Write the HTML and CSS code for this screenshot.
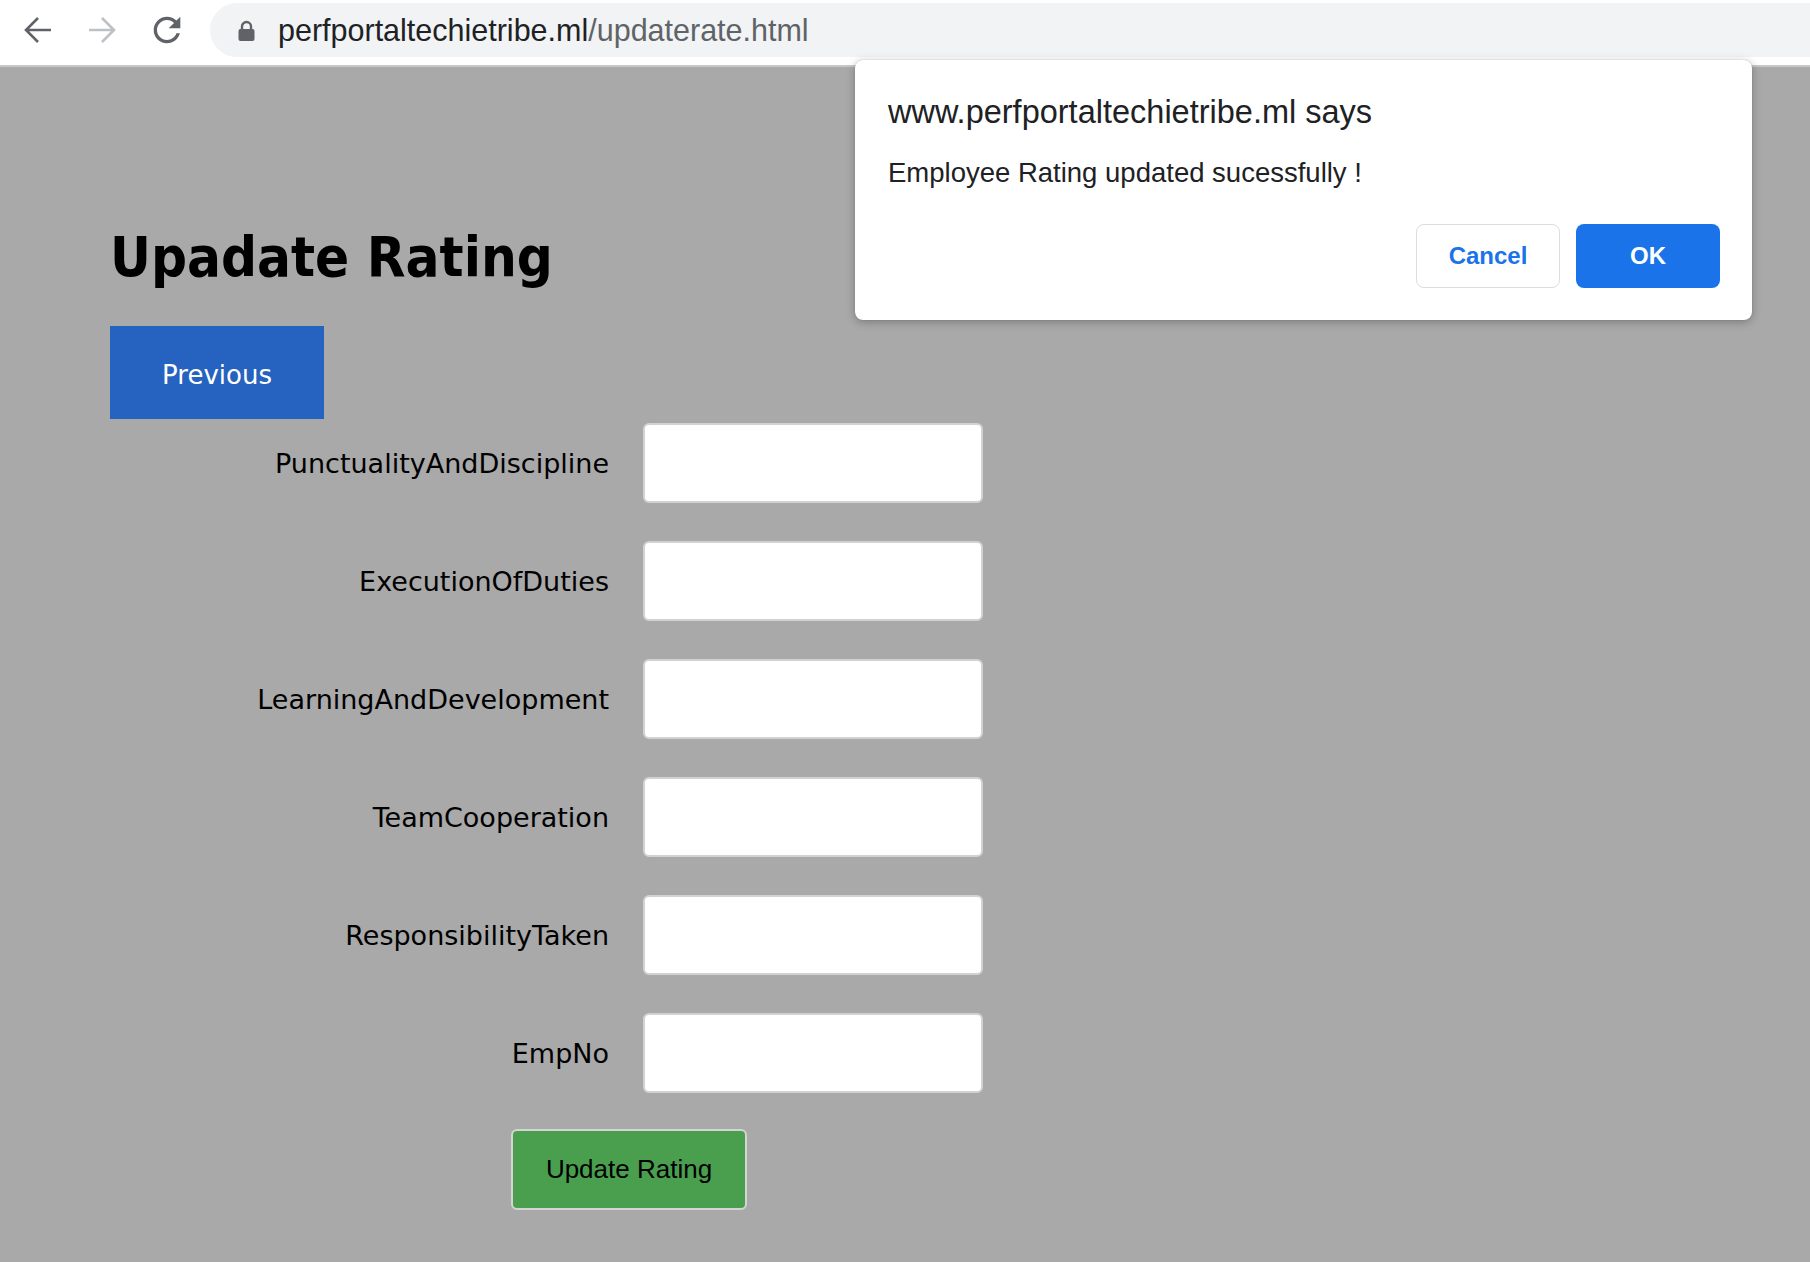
FILE: index.html
```html
<!DOCTYPE html>
<html lang="en">
<head>
<meta charset="utf-8">
<title>Update Rating</title>
<link rel="stylesheet" href="styles.css">
</head>
<body>
<header class="toolbar">
  <svg class="nav-icon back" width="28" height="28" viewBox="0 0 28 28"><path d="M27 14H2M14 2L2 14L14 26" fill="none" stroke="#5f6368" stroke-width="2.6"/></svg>
  <svg class="nav-icon fwd" width="28" height="28" viewBox="0 0 28 28"><path d="M1 14H26M14 2L26 14L14 26" fill="none" stroke="#bdc1c6" stroke-width="2.6"/></svg>
  <svg class="nav-icon reload" width="40" height="40" viewBox="0 0 24 24"><path fill="#5f6368" d="M17.65 6.35C16.2 4.9 14.21 4 12 4c-4.42 0-7.99 3.58-7.99 8s3.57 8 7.99 8c3.73 0 6.84-2.55 7.73-6h-2.08c-.82 2.33-3.04 4-5.65 4-3.31 0-6-2.69-6-6s2.69-6 6-6c1.66 0 3.14.69 4.22 1.78L13 11h7V4l-2.35 2.35z"/></svg>
  <div class="omnibox">
    <svg class="lock" width="17" height="21" viewBox="0 0 17 21"><path d="M4 10V6.5a4.5 4.5 0 0 1 9 0V10" fill="none" stroke="#5f6368" stroke-width="2.4"/><rect x="0.5" y="9" width="16" height="12" rx="2" fill="#5f6368"/></svg>
    <span class="url"><span class="host">perfportaltechietribe.ml</span><span class="path">/updaterate.html</span></span>
  </div>
</header>

<main class="page">
  <h1 class="title">Upadate Rating</h1>
  <button class="prev" type="button">Previous</button>
  <form class="rating-form">
    <label class="field-label" for="f1">PunctualityAndDiscipline</label>
    <input class="field-input" id="f1" type="text">
    <label class="field-label" for="f2">ExecutionOfDuties</label>
    <input class="field-input" id="f2" type="text">
    <label class="field-label" for="f3">LearningAndDevelopment</label>
    <input class="field-input" id="f3" type="text">
    <label class="field-label" for="f4">TeamCooperation</label>
    <input class="field-input" id="f4" type="text">
    <label class="field-label" for="f5">ResponsibilityTaken</label>
    <input class="field-input" id="f5" type="text">
    <label class="field-label" for="f6">EmpNo</label>
    <input class="field-input" id="f6" type="text">
  </form>
  <button class="submit" type="button">Update Rating</button>
</main>

<div class="dialog" role="dialog">
  <div class="dialog-title">www.perfportaltechietribe.ml says</div>
  <div class="dialog-msg">Employee Rating updated sucessfully !</div>
  <div class="dialog-actions">
    <button class="btn-cancel" type="button">Cancel</button>
    <button class="btn-ok" type="button">OK</button>
  </div>
</div>
</body>
</html>
```
FILE: styles.css
```css
html, body {
  margin: 0;
  padding: 0;
}
body {
  width: 1810px;
  height: 1262px;
  overflow: hidden;
  background: #a9a9a9;
  font-family: "DejaVu Sans", sans-serif;
  position: relative;
}

/* ---------- browser toolbar ---------- */
.toolbar {
  box-sizing: border-box;
  height: 67px;
  padding: 0 0 5px 24px;
  background: #ffffff;
  border-bottom: 2px solid #c7c7c7;
  display: flex;
  align-items: center;
}
.nav-icon {
  flex: none;
  display: block;
}
.fwd {
  margin-left: 36px;
}
.reload {
  margin-left: 31px;
}
.omnibox {
  flex: 1;
  margin-left: 23px;
  height: 54px;
  background: #f1f3f4;
  border-radius: 27px 0 0 27px;
  display: flex;
  align-items: center;
  padding-left: 28px;
}
.lock {
  display: block;
  flex: none;
}
.url {
  margin-left: 23px;
  font-family: "Liberation Sans", Arial, sans-serif;
  font-size: 30.5px;
  line-height: 1;
  white-space: nowrap;
}
.host {
  color: #202124;
}
.path {
  color: #5f6368;
}

/* ---------- page ---------- */
.page {
  padding-left: 110px;
  display: flex;
  flex-direction: column;
  align-items: flex-start;
}
.title {
  margin: 157px 0 0 0;
  font-family: "DejaVu Sans Condensed", "DejaVu Sans", sans-serif;
  font-weight: bold;
  font-size: 56px;
  line-height: 66px;
  color: #000;
}
.prev {
  margin-top: 36px;
  width: 214px;
  height: 93px;
  box-sizing: border-box;
  border: none;
  background: #2663c0;
  color: #ffffff;
  font-family: "DejaVu Sans", sans-serif;
  font-size: 26px;
  padding: 4px 0 0 0;
}
.rating-form {
  margin-top: 4px;
  display: grid;
  grid-template-columns: 499px 340px;
  column-gap: 34px;
  row-gap: 38px;
  align-items: center;
}
.field-label {
  text-align: right;
  font-family: "DejaVu Sans", sans-serif;
  font-size: 27px;
  color: #000;
  white-space: nowrap;
}
.field-input {
  box-sizing: border-box;
  width: 340px;
  height: 80px;
  margin: 0;
  background: #ffffff;
  border: 2px solid #d2d2d2;
  border-radius: 6px;
  outline: none;
}
.submit {
  margin: 36px 0 0 401px;
  width: 236px;
  height: 81px;
  box-sizing: border-box;
  background: #4a9f4e;
  border: 2px solid #d4d4d4;
  border-radius: 6px;
  font-family: "Liberation Sans", Arial, sans-serif;
  font-size: 26px;
  color: #000;
  padding: 0;
}

/* ---------- alert dialog ---------- */
.dialog {
  position: absolute;
  top: 60px;
  left: 855px;
  width: 897px;
  height: 260px;
  box-sizing: border-box;
  padding: 32px 32px 32px 33px;
  background: #ffffff;
  border-radius: 8px;
  box-shadow: 0 2px 10px rgba(0, 0, 0, 0.28), 0 0 1px rgba(0, 0, 0, 0.3);
  display: flex;
  flex-direction: column;
  font-family: "Liberation Sans", Arial, sans-serif;
  color: #202124;
}
.dialog-title {
  font-size: 32.5px;
  line-height: 40px;
  white-space: nowrap;
}
.dialog-msg {
  margin-top: 24px;
  font-size: 27.5px;
  line-height: 34px;
  white-space: nowrap;
}
.dialog-actions {
  margin-top: 34px;
  display: flex;
  justify-content: flex-end;
  gap: 16px;
}
.btn-cancel,
.btn-ok {
  width: 144px;
  height: 64px;
  box-sizing: border-box;
  border-radius: 8px;
  font-family: "Liberation Sans", Arial, sans-serif;
  font-weight: bold;
  font-size: 24px;
  padding: 0;
}
.btn-cancel {
  background: #ffffff;
  border: 1.5px solid #dadce0;
  color: #1a73e8;
}
.btn-ok {
  background: #1a73e8;
  border: none;
  color: #ffffff;
}
```
